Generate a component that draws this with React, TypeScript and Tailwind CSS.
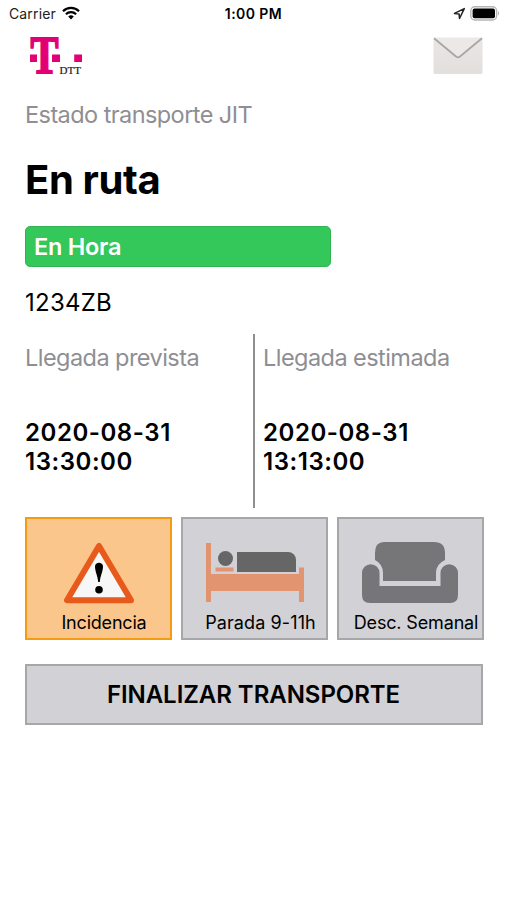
import React from "react";

const StatusBar = () => {
  return (
    <div className="flex h-7 items-center justify-between pl-[9px] pr-[7px]">
      <div className="flex w-[160px] items-center gap-[6px]">
        <span className="text-[14px] leading-7 tracking-[0.01em] text-[#222]">
          Carrier
        </span>
        <svg className="-mt-[2px]" width="18" height="14" viewBox="0 0 18 14" fill="none">
          <path d="M1 5.2a11.4 11.4 0 0 1 16 0" stroke="#000" strokeWidth="2.3" />
          <path d="M3.9 8.2a7.3 7.3 0 0 1 10.2 0" stroke="#000" strokeWidth="2.2" />
          <path d="M6.2 10.6a4.1 4.1 0 0 1 5.6 0L9 13.4z" fill="#000" />
        </svg>
      </div>
      <span className="text-[14px] font-semibold leading-7 tracking-[0.03em]">1:00 PM</span>
      <div className="flex w-[162px] items-center justify-end gap-[4px] pb-[2px]">
        <svg width="13" height="13" viewBox="0 0 13 13" fill="none">
          <path
            d="M11.3 1.6 1.5 6.4l4.6.5.4 4.6z"
            stroke="#222"
            strokeWidth="1.5"
            strokeLinejoin="round"
          />
        </svg>
        <svg width="30" height="15" viewBox="0 0 30 15">
          <rect x="0.8" y="0.8" width="25.8" height="13.2" rx="4" fill="#fff" stroke="#b5b5b5" strokeWidth="1.4" />
          <rect x="2.6" y="2.6" width="22.4" height="9.6" rx="2" fill="#000" />
          <path d="M28 5q1.9 2.4 0 4.8z" fill="#aaa" />
        </svg>
      </div>
    </div>
  );
};

const Logo = () => {
  return (
    <svg className="-mt-[15px]" width="56" height="70" viewBox="0 -15 56 70">
      <text
        x="2.5"
        y="36"
        fontSize="53"
        fontWeight="700"
        fontFamily="Liberation Serif, serif"
        textLength="28"
        lengthAdjust="spacingAndGlyphs"
        fill="#e20074"
        stroke="#e20074"
        strokeWidth="1.8"
      >
        T
      </text>
      <rect x="2" y="17.5" width="7" height="7.5" fill="#e20074" />
      <rect x="24" y="17.5" width="8" height="7.5" fill="#e20074" />
      <rect x="46.2" y="17.5" width="7.8" height="7.5" fill="#e20074" />
      <text
        x="31.6"
        y="36.5"
        fontSize="9.5"
        fontFamily="Liberation Serif, serif"
        textLength="21.4"
        lengthAdjust="spacingAndGlyphs"
        fill="#222"
        stroke="#222"
        strokeWidth="0.2"
      >
        DTT
      </text>
    </svg>
  );
};

const MailIcon = () => {
  return (
    <svg className="mr-px" width="50" height="38" viewBox="0 0 50 38" fill="none">
      <defs>
        <linearGradient id="paper" x1="0" y1="0" x2="0" y2="1">
          <stop offset="0" stopColor="#e9e6e5" />
          <stop offset="1" stopColor="#e3dfdd" />
        </linearGradient>
      </defs>
      <rect x="0.5" y="0.5" width="49" height="36.5" rx="1.5" fill="url(#paper)" />
      <path d="M1.5 1h47L27 19.5q-2 1.6-4 0z" fill="#ebe8e7" />
      <path d="M1 1.2 23 19.5q2 1.6 4 0L49 1.2" stroke="#aaa6a4" strokeWidth="1.8" />
    </svg>
  );
};

const WarningIcon = () => {
  return (
    <svg width="72" height="64" viewBox="0 0 72 64">
      <path
        d="M36 5 4 59.2h64z"
        fill="#f7f7f7"
        stroke="#e75a1c"
        strokeWidth="6"
        strokeLinejoin="round"
      />
      <path d="M32 25.5c0-5 8-5 8 0 0 5-2.6 9-3.2 15.5h-1.6C34.6 34.5 32 30.5 32 25.5z" fill="#000" />
      <circle cx="36" cy="48.8" r="3.8" fill="#000" />
    </svg>
  );
};

const BedIcon = () => {
  return (
    <svg width="98" height="60" viewBox="0 0 98 60">
      <path d="M0 0h5v31h88V24.5h5V59h-5V48H5v11H0z" fill="#e29470" />
      <rect x="9.5" y="24.5" width="18" height="4" fill="#e29470" />
      <circle cx="19.5" cy="15.5" r="7.5" fill="#666" />
      <path d="M31 9h51a8 8 0 0 1 8 8v12H31z" fill="#666" />
    </svg>
  );
};

const SofaIcon = () => {
  return (
    <svg className="-ml-px" width="98" height="62" viewBox="0 0 98 62" fill="#767678">
      <path d="M23 0h50q11 0 11 11v7q-9 4-9 13v8H22v-8q0-9-8-13V11Q14 0 23 0z" />
      <path d="M1 31a8.7 8.7 0 0 1 17.5 0v13h61V31A8.7 8.7 0 0 1 97 31v22q0 8-8 8H9q-8 0-8-8z" />
    </svg>
  );
};

const Arrival = ({ label, date, time }: { label: string; date: string; time: string }) => {
  return (
    <div className="flex flex-col">
      <span className="mt-[9px] text-[23.5px] leading-[29px] tracking-[-0.55px] text-[#8e8e93]">
        {label}
      </span>
      <span className="mt-[46px] text-[24px] font-semibold leading-[29px] tracking-[0.55px]">
        {date}
      </span>
      <span className="text-[24px] font-semibold leading-[29px] tracking-[0.55px]">{time}</span>
    </div>
  );
};

const App = () => {
  return (
    <main className="h-[900px] w-[507px] overflow-hidden bg-white font-['Inter',sans-serif] text-black">
      <StatusBar />
      <div className="flex flex-col pl-[25px] pr-[23px]">
        <header className="flex h-[60px] items-start justify-between pt-[9px]">
          <div className="pl-[3px]">
            <Logo />
          </div>
          <MailIcon />
        </header>

        <span className="mt-[12px] text-[23.5px] leading-[29px] tracking-[-0.57px] text-[#8e8e93]">
          Estado transporte JIT
        </span>
        <h1 className="mt-[26px] text-[40px] font-bold leading-[50px] tracking-[-0.35px]">En ruta</h1>
        <div className="mt-[21px] flex h-[41px] w-[306px] items-center rounded-[5px] border border-[#32b454] bg-[#34c759] pb-px pl-2">
          <span className="text-[23.5px] font-semibold leading-[29px] tracking-[-0.25px] text-white">
            En Hora
          </span>
        </div>
        <span className="mt-[21px] text-[24px] leading-[29px] tracking-[0.25px]">1234ZB</span>

        <section className="mt-[17px] flex h-[174px]">
          <div className="w-[228px]">
            <Arrival label="Llegada prevista" date="2020-08-31" time="13:30:00" />
          </div>
          <div className="mr-2 w-[2px] bg-[#8e8e93]" />
          <Arrival label="Llegada estimada" date="2020-08-31" time="13:13:00" />
        </section>

        <section className="mt-[9px] flex gap-[9px]">
          <button className="flex h-[123px] w-[147px] flex-col items-center border-2 border-[#f39c12] bg-[#fbc68b] pt-[22px]">
            <WarningIcon />
            <span className="ml-[11px] mt-[6px] whitespace-nowrap text-[18px] leading-[24px] tracking-[-0.2px]">
              Incidencia
            </span>
          </button>
          <button className="flex h-[123px] w-[147px] flex-col items-center border-2 border-[#a7a7aa] bg-[#d1d1d6] pt-[24px]">
            <BedIcon />
            <span className="ml-[12px] mt-[8px] whitespace-nowrap text-[18px] leading-[24px] tracking-[0.1px]">
              Parada 9-11h
            </span>
          </button>
          <button className="flex h-[123px] w-[147px] flex-col items-center border-2 border-[#a7a7aa] bg-[#d1d1d6] pt-[23px]">
            <SofaIcon />
            <span className="ml-[11px] mt-[7px] whitespace-nowrap text-[18px] leading-[24px] tracking-[-0.15px]">
              Desc. Semanal
            </span>
          </button>
        </section>

        <button className="mt-[24px] flex h-[61px] w-[458px] items-center justify-center border-2 border-[#a7a7aa] bg-[#d1d1d6] pt-px pr-px text-[24px] font-semibold tracking-[-0.05px]">
          FINALIZAR TRANSPORTE
        </button>
      </div>
    </main>
  );
};

export default App;
